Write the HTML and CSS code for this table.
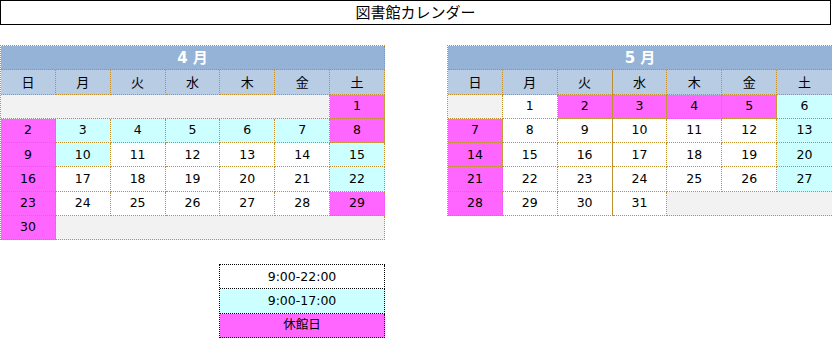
FILE: index.html
```html
<!DOCTYPE html>
<html lang="ja">
<head>
<meta charset="utf-8">
<title>図書館カレンダー</title>
<link rel="stylesheet" href="styles.css">
</head>
<body>
<div class="title">図書館カレンダー</div>
<div class="calendars">
  <table class="cal cal-apr">
    <tr class="month"><td colspan="7">4 月</td></tr>
    <tr class="wd"><td>日</td><td>月</td><td>火</td><td>水</td><td>木</td><td>金</td><td>土</td></tr>
    <tr><td class="empty" colspan="6"></td><td class="off">1</td></tr>
    <tr><td class="off">2</td><td class="short">3</td><td class="short">4</td><td class="short">5</td><td class="short">6</td><td class="short">7</td><td class="off">8</td></tr>
    <tr><td class="off">9</td><td class="short">10</td><td>11</td><td>12</td><td>13</td><td>14</td><td class="short">15</td></tr>
    <tr><td class="off">16</td><td>17</td><td>18</td><td>19</td><td>20</td><td>21</td><td class="short">22</td></tr>
    <tr><td class="off">23</td><td>24</td><td>25</td><td>26</td><td>27</td><td>28</td><td class="off">29</td></tr>
    <tr><td class="off">30</td><td class="empty" colspan="6"></td></tr>
  </table>
  <table class="cal cal-may">
    <tr class="month"><td colspan="7">5 月</td></tr>
    <tr class="wd"><td>日</td><td>月</td><td class="sep">火</td><td>水</td><td>木</td><td>金</td><td>土</td></tr>
    <tr><td class="empty"></td><td>1</td><td class="off sep">2</td><td class="off">3</td><td class="off">4</td><td class="off">5</td><td class="short">6</td></tr>
    <tr><td class="off">7</td><td>8</td><td class="sep">9</td><td>10</td><td>11</td><td>12</td><td class="short">13</td></tr>
    <tr><td class="off">14</td><td>15</td><td class="sep">16</td><td>17</td><td>18</td><td>19</td><td class="short">20</td></tr>
    <tr><td class="off">21</td><td>22</td><td class="sep">23</td><td>24</td><td>25</td><td>26</td><td class="short">27</td></tr>
    <tr><td class="off">28</td><td>29</td><td class="sep">30</td><td>31</td><td class="empty" colspan="3"></td></tr>
  </table>
</div>
<table class="legend">
  <tr><td>9:00-22:00</td></tr>
  <tr><td class="short">9:00-17:00</td></tr>
  <tr><td class="off">休館日</td></tr>
</table>
</body>
</html>
```
FILE: styles.css
```css
html, body {
  margin: 0;
  padding: 0;
  background: #ffffff;
  overflow: hidden;
}
body {
  width: 832px;
  font-family: "DejaVu Sans", "Noto Sans CJK JP", sans-serif;
  color: #000;
}
.title {
  box-sizing: border-box;
  width: 831px;
  height: 25px;
  border: 1px solid #000;
  font-family: "Noto Sans CJK JP", sans-serif;
  font-size: 15px;
  line-height: 22px;
  text-align: center;
}
.calendars {
  display: flex;
  align-items: flex-start;
  gap: 62px;
  margin-top: 20px;
}
.cal {
  border-collapse: separate;
  border-spacing: 0;
  table-layout: fixed;
  border-top: 1px dotted #c09030;
  border-left: 1px dotted #c09030;
  flex: none;
  width: 385px;
}
.cal tr { height: 24.25px; }
.cal td {
  padding: 0;
  border-right: 1px dotted #c09030;
  border-bottom: 1px dotted #c09030;
  text-align: center;
  vertical-align: middle;
  font-size: 12.5px;
  line-height: 16px;
  background: #ffffff;
}
.cal-may td:last-child { border-right: none; }
.cal .month td {
  background: #95b3d7;
  color: #ffffff;
  font-weight: bold;
  font-size: 15px;
}
.cal .wd td {
  background: #b8cce4;
  font-family: "Noto Sans CJK JP", sans-serif;
  font-size: 13px;
}
.cal td.empty { background: #f2f2f2; }
.cal td.sep { border-right: 1px solid #c09030; }
td.off { background: #ff66ff; }
td.short { background: #ccffff; }
.cal td.off { background: #ff66ff; }
.cal td.short { background: #ccffff; }

.legend {
  margin-top: 24px;
  margin-left: 219px;
  width: 166px;
  border-collapse: separate;
  border-spacing: 0;
  table-layout: fixed;
  border-top: 1px dotted #000;
  border-left: 1px dotted #000;
}
.legend tr { height: 24.25px; }
.legend td {
  padding: 0;
  border-right: 1px dotted #000;
  border-bottom: 1px dotted #000;
  text-align: center;
  font-size: 12.5px;
  line-height: 16px;
}
```
